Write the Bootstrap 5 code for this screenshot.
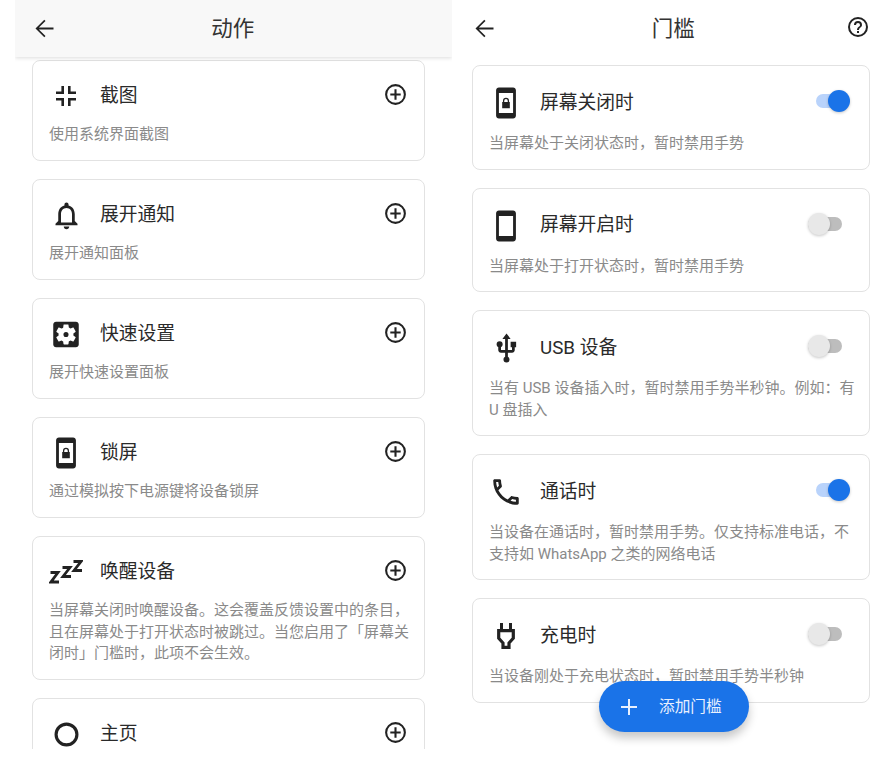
<!doctype html>
<html lang="zh">
<head>
<meta charset="utf-8">
<link href="https://cdn.jsdelivr.net/npm/bootstrap@5.3.0/dist/css/bootstrap.min.css" rel="stylesheet">
<style>
body{background:#fff;font-family:Roboto,"Noto Sans CJK SC",sans-serif;color:#222;overflow:hidden}
.stage{width:887px;height:764px}
.pane-l{width:437px;height:749px;margin-left:15px;flex:none;overflow:hidden}
.pane-r{width:435px;height:764px;flex:none;position:relative}
.top-l{height:57px;background:#f8f8f8;box-shadow:0 1px 4px rgba(0,0,0,.14);position:relative;z-index:2;padding-left:15.5px;padding-right:19px}
.top-r{height:57px;padding-left:18.5px;width:418px}
.top-title{font-size:21.5px;line-height:1;color:#333;flex:1;text-align:center}
.top-l .top-title{margin-right:25px}
.top-r .top-title{margin-left:3px}
.ico-back{width:27px;height:27px;flex:none}
.ico-help{width:24px;height:24px;flex:none;margin-bottom:4px}
.list-l{padding:3px 27px 0 17px}
.list-r{padding:8px 0 0 20px;width:418px}
.act{--bs-card-border-color:#e2e2e2;--bs-card-border-radius:8px;--bs-card-inner-border-radius:7px;margin-bottom:18px;padding:15px 12px 15px 16px}
.list-r .act{padding:17px 12px 16px 16px;height:104.5px}
.list-r .act.two{height:126.2px}
.act-row{height:40px}
.icon-box{width:34px;height:40px;flex:none;margin-right:17px}
.act-title{font-size:18.8px;line-height:1;color:#2a2a2a;flex:1}
.act-desc{font-size:15px;line-height:21.7px;color:#8a8a8a;margin-top:8px}
.list-r .act-desc{margin-top:10px}
.act-l{height:101px}
.act-l.three{height:144.4px}
.act-plus{width:25px;height:25px;flex:none;margin-right:4px;margin-bottom:4px}
.tog{width:42px;height:24px;flex:none;position:relative;margin-right:7px;margin-bottom:4px}
.tog-track{position:absolute;top:5px;height:14px;left:0;width:34px;background:#bdbdbd;border-radius:7px}
.tog-knob{position:absolute;top:1px;left:0;width:22px;height:22px;border-radius:50%;background:#e8e8e8;box-shadow:0 1px 3px rgba(0,0,0,.22)}
.tog.on .tog-track{left:8px;width:26px;background:#b9d3fb}
.tog.on .tog-knob{left:20px;background:#1a73e8}
.fab{position:absolute;left:147px;top:681px;width:150px;height:51px;background:#1a73e8;color:#e8f0fe;font-size:15.7px;box-shadow:0 6px 10px rgba(0,0,0,.22);padding:0 0 0 21px}
.fab svg{margin-right:21px}
</style>
</head>
<body>
<svg width="0" height="0" class="d-none"><defs>
  <symbol id="i-plus" viewBox="0 0 24 24"><path d="M13 7h-2v4H7v2h4v4h2v-4h4v-2h-4zM12 2a10 10 0 1 0 0 20 10 10 0 0 0 0-20zm0 18a8 8 0 1 1 0-16 8 8 0 0 1 0 16z"/></symbol>
  <symbol id="i-back" viewBox="0 0 24 24"><path d="M20 11.200H7l5.900-5.900L11.800 4.200 4 12l7.800 7.800 1.100-1.100L7 12.800h13z"/></symbol>
  <symbol id="i-phone-lock" viewBox="0 0 24 24"><path d="M17 1.010 7 1c-1.100 0-2 .9-2 2v18c0 1.100.9 2 2 2h10c1.100 0 2-.9 2-2V3c0-1.100-.9-1.990-2-1.990zM17 19H7V5h10z"/><path d="M9.300 11.300h5.400v4.400H9.300z"/><path d="M10.300 11.500v-1a1.700 1.700 0 0 1 3.400 0v1" fill="none" stroke="#222" stroke-width=".9"/></symbol>
</defs></svg>
<div class="stage d-flex">
  <main class="pane-l">
    <header class="top-l d-flex align-items-center">
      <svg class="ico-back" fill="#222"><use href="#i-back"/></svg>
      <div class="top-title">动作</div>
    </header>
    <div class="list-l">
      <section class="card act act-l">
        <div class="act-row d-flex align-items-center">
          <div class="icon-box d-flex align-items-center justify-content-center"><svg width="20" height="20" viewBox="0 0 20 20" fill="#222"><path d="M5.400 0h2.600v8H0V5.400h5.400zM12 0h2.600v5.400H20V8h-8zM0 12h8v8H5.400v-5.400H0zM12 12h8v2.600h-5.400V20H12z"/></svg></div>
          <div class="act-title">截图</div>
          <svg class="act-plus" fill="#222"><use href="#i-plus"/></svg>
        </div>
        <p class="act-desc mb-0">使用系统界面截图</p>
      </section>
      <section class="card act act-l">
        <div class="act-row d-flex align-items-center">
          <div class="icon-box d-flex align-items-center justify-content-center"><svg width="33" height="33" viewBox="0 0 24 24" fill="#222"><path d="M12 22c1.100 0 2-.9 2-2h-4c0 1.100.9 2 2 2zm6-6v-5c0-3.070-1.630-5.640-4.500-6.320V4c0-.83-.67-1.500-1.500-1.500s-1.500.67-1.500 1.500v.68C7.640 5.360 6 7.920 6 11v5l-2 2v1h16v-1zm-2 1H8v-6c0-2.480 1.510-4.500 4-4.500s4 2.020 4 4.500z"/></svg></div>
          <div class="act-title">展开通知</div>
          <svg class="act-plus" fill="#222"><use href="#i-plus"/></svg>
        </div>
        <p class="act-desc mb-0">展开通知面板</p>
      </section>
      <section class="card act act-l">
        <div class="act-row d-flex align-items-center">
          <div class="icon-box d-flex align-items-center justify-content-center"><svg width="35" height="35" viewBox="0 0 24 24" fill="#222"><path d="M19 3H5c-1.100 0-2 .9-2 2v14c0 1.100.9 2 2 2h14c1.100 0 2-.9 2-2V5c0-1.100-.9-2-2-2zm-1.750 9c0 .23-.02.46-.05.68l1.480 1.160c.13.11.17.3.08.45l-1.400 2.420c-.09.15-.27.21-.43.15l-1.740-.7c-.36.28-.76.51-1.180.69l-.26 1.850c-.03.17-.18.3-.35.3h-2.800c-.17 0-.32-.13-.35-.29l-.26-1.850c-.43-.18-.82-.41-1.180-.69l-1.740.7c-.16.06-.34 0-.43-.15l-1.400-2.420a.35.35 0 0 1 .08-.45l1.480-1.160c-.03-.23-.05-.46-.05-.69 0-.23.02-.46.05-.68l-1.480-1.160a.35.35 0 0 1-.08-.45l1.400-2.420c.09-.15.27-.21.43-.15l1.740.7c.36-.28.76-.51 1.180-.69l.26-1.850c.03-.17.18-.3.35-.3h2.800c.17 0 .32.13.35.29l.26 1.850c.43.18.82.41 1.180.69l1.740-.7c.16-.06.34 0 .43.15l1.400 2.420c.09.15.05.34-.08.45l-1.480 1.160c.03.23.05.46.05.69zM12 10.200a1.800 1.800 0 1 0 0 3.600 1.800 1.800 0 0 0 0-3.600z"/></svg></div>
          <div class="act-title">快速设置</div>
          <svg class="act-plus" fill="#222"><use href="#i-plus"/></svg>
        </div>
        <p class="act-desc mb-0">展开快速设置面板</p>
      </section>
      <section class="card act act-l">
        <div class="act-row d-flex align-items-center">
          <div class="icon-box d-flex align-items-center justify-content-center"><svg width="34" height="34" fill="#222"><use href="#i-phone-lock"/></svg></div>
          <div class="act-title">锁屏</div>
          <svg class="act-plus" fill="#222"><use href="#i-plus"/></svg>
        </div>
        <p class="act-desc mb-0">通过模拟按下电源键将设备锁屏</p>
      </section>
      <section class="card act act-l three">
        <div class="act-row d-flex align-items-center">
          <div class="icon-box d-flex align-items-center justify-content-center"><svg width="34" height="26" viewBox="0 0 34 26" fill="none" stroke="#222" stroke-width="2.800"><path d="M1.500 13.500h7.500L2 23h8M13.500 8.500h7.500L14 17.500h8M24.500 2.500H32L25 11.500h8"/></svg></div>
          <div class="act-title">唤醒设备</div>
          <svg class="act-plus" fill="#222"><use href="#i-plus"/></svg>
        </div>
        <p class="act-desc mb-0">当屏幕关闭时唤醒设备。这会覆盖反馈设置中的条目，且在屏幕处于打开状态时被跳过。当您启用了「屏幕关闭时」门槛时，此项不会生效。</p>
      </section>
      <section class="card act act-l">
        <div class="act-row d-flex align-items-center">
          <div class="icon-box d-flex align-items-center justify-content-center"><svg width="25" height="25" viewBox="0 0 24 24" fill="none" stroke="#222" stroke-width="3"><circle cx="12" cy="12" r="10"/></svg></div>
          <div class="act-title">主页</div>
          <svg class="act-plus" fill="#222"><use href="#i-plus"/></svg>
        </div>
      </section>
    </div>
  </main>
  <main class="pane-r">
    <header class="top-r d-flex align-items-center">
      <svg class="ico-back" fill="#222"><use href="#i-back"/></svg>
      <div class="top-title">门槛</div>
      <svg class="ico-help" viewBox="0 0 24 24" fill="#222"><path d="M11 18h2v-2h-2zm1-16a10 10 0 1 0 0 20 10 10 0 0 0 0-20zm0 18a8 8 0 1 1 0-16 8 8 0 0 1 0 16zm0-14a4 4 0 0 0-4 4h2a2 2 0 1 1 4 0c0 2-3 1.750-3 5h2c0-2.250 3-2.500 3-5a4 4 0 0 0-4-4z"/></svg>
    </header>
    <div class="list-r">
      <section class="card act">
        <div class="act-row d-flex align-items-center">
          <div class="icon-box d-flex align-items-center justify-content-center"><svg width="34" height="34" fill="#222"><use href="#i-phone-lock"/></svg></div>
          <div class="act-title">屏幕关闭时</div>
          <div class="tog on"><span class="tog-track"></span><span class="tog-knob"></span></div>
        </div>
        <p class="act-desc mb-0">当屏幕处于关闭状态时，暂时禁用手势</p>
      </section>
      <section class="card act">
        <div class="act-row d-flex align-items-center">
          <div class="icon-box d-flex align-items-center justify-content-center"><svg width="34" height="34" viewBox="0 0 24 24" fill="#222"><path d="M17 1.010 7 1c-1.100 0-2 .9-2 2v18c0 1.100.9 2 2 2h10c1.100 0 2-.9 2-2V3c0-1.100-.9-1.990-2-1.990zM17 19H7V5h10z"/></svg></div>
          <div class="act-title">屏幕开启时</div>
          <div class="tog"><span class="tog-track"></span><span class="tog-knob"></span></div>
        </div>
        <p class="act-desc mb-0">当屏幕处于打开状态时，暂时禁用手势</p>
      </section>
      <section class="card act two">
        <div class="act-row d-flex align-items-center">
          <div class="icon-box d-flex align-items-center justify-content-center"><svg width="33" height="33" viewBox="0 0 24 24" fill="#222"><path d="M15 7v4h1v2h-3V5h2l-3-4-3 4h2v8H8v-2.070c.7-.37 1.200-1.080 1.200-1.930A2.200 2.200 0 0 0 7 6.800 2.200 2.200 0 0 0 4.800 9c0 .85.5 1.560 1.200 1.930V13c0 1.110.89 2 2 2h3v3.050c-.71.37-1.200 1.100-1.200 1.950a2.200 2.200 0 0 0 4.400 0c0-.85-.49-1.580-1.200-1.950V15h3c1.110 0 2-.89 2-2v-2h1V7z"/></svg></div>
          <div class="act-title">USB 设备</div>
          <div class="tog"><span class="tog-track"></span><span class="tog-knob"></span></div>
        </div>
        <p class="act-desc mb-0">当有 USB 设备插入时，暂时禁用手势半秒钟。例如：有 U 盘插入</p>
      </section>
      <section class="card act two">
        <div class="act-row d-flex align-items-center">
          <div class="icon-box d-flex align-items-center justify-content-center"><svg width="36" height="36" viewBox="0 0 24 24" fill="#222"><path d="M6.540 5c.06.89.21 1.760.45 2.590l-1.200 1.200c-.41-1.200-.67-2.470-.76-3.790zm9.860 12.020c.85.24 1.720.39 2.600.45v1.490c-1.320-.09-2.590-.35-3.800-.75zM7.500 3H4c-.55 0-1 .45-1 1 0 9.390 7.610 17 17 17 .55 0 1-.45 1-1v-3.490c0-.55-.45-1-1-1-1.240 0-2.450-.2-3.570-.57a.84.84 0 0 0-.31-.05c-.26 0-.51.1-.71.29l-2.200 2.200a15.150 15.150 0 0 1-6.590-6.590l2.200-2.200c.28-.28.36-.67.25-1.020A11.360 11.360 0 0 1 8.500 4c0-.55-.45-1-1-1z"/></svg></div>
          <div class="act-title">通话时</div>
          <div class="tog on"><span class="tog-track"></span><span class="tog-knob"></span></div>
        </div>
        <p class="act-desc mb-0">当设备在通话时，暂时禁用手势。仅支持标准电话，不支持如 WhatsApp 之类的网络电话</p>
      </section>
      <section class="card act">
        <div class="act-row d-flex align-items-center">
          <div class="icon-box d-flex align-items-center justify-content-center"><svg width="18" height="26" viewBox="0 0 18 26" fill="#222"><path d="M3 0h3v8H3zM12 0h3v8h-3z"/><path d="M1.700 7.700h14.600v7.500l-4.300 4.800v4.300H6V20l-4.300-4.800z" fill="none" stroke="#222" stroke-width="3.200"/></svg></div>
          <div class="act-title">充电时</div>
          <div class="tog"><span class="tog-track"></span><span class="tog-knob"></span></div>
        </div>
        <p class="act-desc mb-0">当设备刚处于充电状态时，暂时禁用手势半秒钟</p>
      </section>
    </div>
    <button type="button" class="btn btn-primary rounded-pill fab d-flex align-items-center border-0">
      <svg width="18" height="18" viewBox="0 0 18 18" fill="#e8f0fe"><path d="M8 1h2v7h7v2h-7v7H8v-7H1V8h7z"/></svg>
      <span>添加门槛</span>
    </button>
  </main>
</div>
<script src="https://cdn.jsdelivr.net/npm/bootstrap@5.3.0/dist/js/bootstrap.bundle.min.js"></script>
</body>
</html>
